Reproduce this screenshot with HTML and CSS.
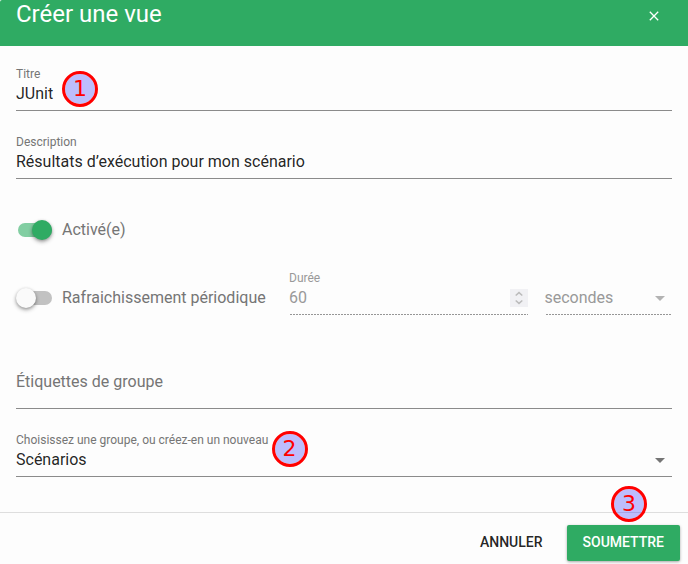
FILE: index.html
```html
<!DOCTYPE html>
<html lang="fr">
<head>
<meta charset="utf-8">
<title>Créer une vue</title>
<link rel="stylesheet" href="styles.css">
</head>
<body>
<main class="dialog">
  <header class="header">
    <h1 class="heading">Créer une vue</h1>
    <svg class="close" viewBox="0 0 10 10"><path d="M.8.8 9.2 9.2M9.2.8.8 9.2"/></svg>
  </header>
  <form class="content">
    <div class="field">
      <span class="label">Titre</span>
      <span class="value">JUnit</span>
    </div>
    <div class="field">
      <span class="label">Description</span>
      <span class="value">Résultats d’exécution pour mon scénario</span>
    </div>
    <div class="row">
      <span class="switch on"><span class="thumb"></span></span>
      <span class="text">Activé(e)</span>
    </div>
    <div class="row">
      <span class="switch"><span class="thumb"></span></span>
      <span class="text periodic">Rafraichissement périodique</span>
      <div class="field disabled duration">
        <span class="label">Durée</span>
        <span class="value">60</span>
        <svg class="spinner" viewBox="0 0 18 18"><path d="M5.7 6.5 9 3.6l3.3 2.9M5.7 11.5 9 14.4l3.3-2.9"/></svg>
      </div>
      <div class="field disabled unit">
        <span class="label"></span>
        <span class="value">secondes</span>
        <span class="arrow"></span>
      </div>
    </div>
    <div class="field tags">
      <span class="value placeholder">Étiquettes de groupe</span>
    </div>
    <div class="field">
      <span class="label">Choisissez une groupe, ou créez-en un nouveau</span>
      <span class="value">Scénarios</span>
      <span class="arrow"></span>
    </div>
  </form>
  <footer class="footer">
    <span class="button">ANNULER</span>
    <span class="button primary">SOUMETTRE</span>
  </footer>
  <span class="badge one">1</span>
  <span class="badge two">2</span>
  <span class="badge three">3</span>
</main>
</body>
</html>
```
FILE: styles.css
```css
* { box-sizing: border-box; }
body { margin: 0; background: #fdfdfd; font-family: Roboto, "Liberation Sans", sans-serif; }
.dialog { position: relative; height: 564px; overflow: hidden; color: rgba(0, 0, 0, .87); }
.header { display: flex; justify-content: space-between; height: 46px; padding: 0 29px 0 16px; border-top-left-radius: 2px; background: #2fab63; color: #fff; }
.heading { margin: -2px 0 0; font-size: 24px; line-height: 32px; font-weight: 400; }
.close { width: 10px; height: 10px; margin-top: 11px; fill: none; stroke: #fff; stroke-width: 1.3; }
.content { height: 466px; padding: 0 16px; }
.field { position: relative; display: flex; flex-direction: column; height: 68px; padding-top: 23px; }
.content > .field:first-child { height: 65px; padding-top: 20px; }
.field::after { content: ""; position: absolute; left: 0; right: 0; bottom: 0; height: 1px; background: #8b8b8b; }
.label { height: 18px; font-size: 12px; line-height: 16px; color: #757575; white-space: nowrap; }
.value { font-size: 16px; line-height: 20px; white-space: nowrap; }
.row { display: flex; height: 68px; }
.text { margin: 41px 0 0 8px; font-size: 16px; line-height: 20px; color: #757575; white-space: nowrap; }
.periodic { width: 227px; }
.switch { position: relative; width: 34px; height: 14px; margin: 44px 2px 0; border-radius: 7px; background: #c2c2c2; }
.thumb { position: absolute; left: -2px; top: -3px; width: 20px; height: 20px; border-radius: 50%; background: #fafafa; box-shadow: 0 2px 4px rgba(0, 0, 0, .3), 0 1px 3px rgba(0, 0, 0, .2); }
.on { background: #82cea2; }
.on .thumb { left: 14px; background: #2fab63; }
.disabled { color: #999; }
.disabled .label { color: #999; }
.disabled::after { background: repeating-linear-gradient(to right, transparent 0 1px, #969696 1px 3px); }
.duration { width: 239px; }
.unit { flex: 1; margin-left: 16.5px; }
.spinner { position: absolute; right: 0; bottom: 8px; width: 18px; height: 18px; background: #f1f1f4; fill: none; stroke: #bbb; stroke-width: 1.5; }
.arrow { position: absolute; right: 7px; bottom: 14px; border: 5px solid transparent; border-top-color: #757575; border-bottom: 0; }
.disabled .arrow { border-top-color: #b3b3b3; }
.tags { height: 94px; padding-top: 57px; }
.placeholder { color: #757575; }
.footer { display: flex; justify-content: flex-end; gap: 8px; height: 52px; padding: 12px 8px 0; border-top: 1px solid #dedede; }
.button { height: 36px; padding: 0 16px; border-radius: 2px; font-size: 14px; line-height: 35px; font-weight: 500; }
.primary { background: #2fab63; color: #fff; box-shadow: 0 1px 3px rgba(0, 0, 0, .35); }
.badge { position: absolute; width: 36px; height: 36px; border: 3px solid #f00; border-radius: 50%; background: rgba(0, 0, 255, .25); background-clip: padding-box; color: #f00; font: 22px/30px "DejaVu Sans", sans-serif; text-align: center; }
.one { left: 62px; top: 70.5px; }
.two { left: 271.6px; top: 431px; }
.three { left: 611px; top: 485.7px; }
```
